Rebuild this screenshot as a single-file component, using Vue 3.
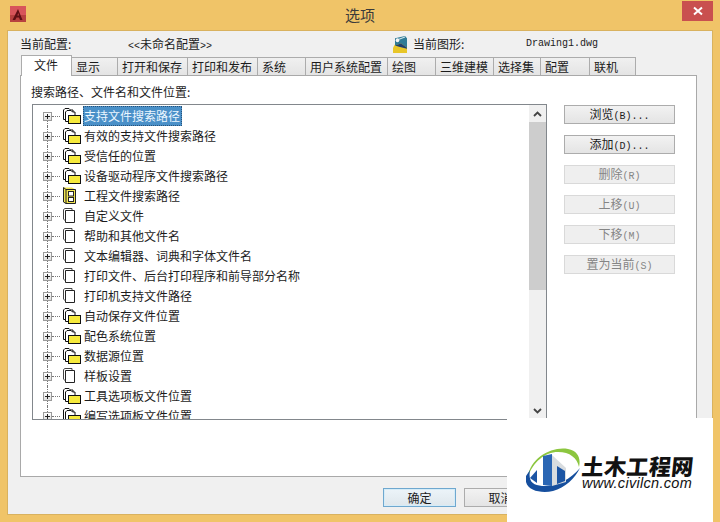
<script setup>
const tabs = [
  { t: '文件', w: 51, active: true }, { t: '显示', w: 46 }, { t: '打开和保存', w: 70 }, { t: '打印和发布', w: 70 },
  { t: '系统', w: 48 }, { t: '用户系统配置', w: 82 }, { t: '绘图', w: 48 }, { t: '三维建模', w: 58 },
  { t: '选择集', w: 47 }, { t: '配置', w: 49 }, { t: '联机', w: 46 }
]
const rows = [
  ['支持文件搜索路径', 'f'], ['有效的支持文件搜索路径', 'f'], ['受信任的位置', 'f'], ['设备驱动程序文件搜索路径', 'f'],
  ['工程文件搜索路径', 'p'], ['自定义文件', 'd'], ['帮助和其他文件名', 'd'], ['文本编辑器、词典和字体文件名', 'd'],
  ['打印文件、后台打印程序和前导部分名称', 'd'], ['打印机支持文件路径', 'd'], ['自动保存文件位置', 'f'], ['配色系统位置', 'f'],
  ['数据源位置', 'f'], ['样板设置', 'd'], ['工具选项板文件位置', 'f'], ['编写选项板文件位置', 'f']
]
const sideButtons = [
  { t: '浏览', k: '(B)...' }, { t: '添加', k: '(D)...' }, { t: '删除', k: '(R)', off: true },
  { t: '上移', k: '(U)', off: true }, { t: '下移', k: '(M)', off: true }, { t: '置为当前', k: '(S)', off: true }
]
</script>

<template>
  <div class="window">
    <header class="titlebar">
      <svg class="app-icon" viewBox="0 0 16 16" width="16" height="16">
        <rect width="16" height="16" fill="#d8555a" />
        <rect x="0" y="9" width="16" height="7" fill="#b8413f" />
        <path d="M2.5 14 L8 3 L12.5 14 L10 14 L9 11.5 L6.5 11.5 L5.2 14 Z" fill="#5f0f14" />
        <path d="M7.4 9.4 L8.3 7 L9 9.4 Z" fill="#c9474a" />
      </svg>
      <h1 class="title">选项</h1>
      <button class="close" type="button">
        <svg viewBox="0 0 10 10" width="10" height="10"><path d="M1 1.5 L9 8.5 M9 1.5 L1 8.5" stroke="#fff" stroke-width="2" /></svg>
      </button>
    </header>

    <div class="client">
      <div class="profile">
        <span class="profile-label">当前配置:</span>
        <span class="profile-name"><span class="half">&lt;&lt;</span>未命名配置<span class="half">&gt;&gt;</span></span>
        <svg class="drawing-icon" viewBox="0 0 16 16" width="16" height="17" preserveAspectRatio="none">
          <path d="M1 16 L1 11 L4 6 L15 6 L15 16 Z" fill="#e8c628" />
          <path d="M3 9 L3 2 L13 0 L15 2 L15 11 L9 7 Z" fill="#2f7b96" />
          <path d="M3 9 L9 7 L15 11 L15 12 L7 10 Z" fill="#1f3f70" />
          <circle cx="5.5" cy="4" r="1.8" fill="#f4f4f4" />
          <path d="M7 3 L13 1" stroke="#cfe4ea" stroke-width="1" />
        </svg>
        <span class="drawing-label">当前图形:</span>
        <span class="half drawing-name">Drawing1.dwg</span>
      </div>

      <nav class="tabs">
        <div v-for="tab in tabs" :key="tab.t" class="tab" :class="{ active: tab.active }" :style="{ width: tab.w + 'px' }">{{ tab.t }}</div>
      </nav>

      <section class="panel">
        <div class="panel-label">搜索路径、文件名和文件位置:</div>
        <div class="panel-main">
          <div class="tree">
            <ul class="tree-list">
              <li v-for="(row, i) in rows" :key="row[0]" class="row" :class="{ first: i === 0 }">
                <span class="expander"><i></i></span>
                <span class="connector"></span>
                <svg class="node-icon" viewBox="0 0 18 18" width="18" height="18">
                  <template v-if="row[1] === 'f'">
                    <path d="M0.5 12.5 V3 L2 1.5 H6 L7.5 3 H10 V12.5 Z" fill="#fff" stroke="#111" />
                    <path d="M2.5 14.5 V5 L4 3.5 H8 L9.5 5 H12 V14.5 Z" fill="#fff" stroke="#111" />
                    <rect x="5.5" y="8.5" width="12" height="8" fill="#f6ea3c" stroke="#111" />
                  </template>
                  <template v-else-if="row[1] === 'p'">
                    <path d="M0.5 0.5 H9 L12.5 2.5 V16.5 H3 L0.5 15 Z" fill="#f3e650" />
                    <path d="M3 2.5 H12.5 V16.5 H3 Z M3 2.5 L0.5 0.5 V15 L3 16.5" fill="none" stroke="#222" />
                    <rect x="5.5" y="4.5" width="5" height="4.5" fill="#fff" stroke="#222" />
                    <rect x="5.5" y="10.5" width="5" height="4" fill="#fff" stroke="#222" />
                  </template>
                  <template v-else>
                    <path d="M0.5 12 V2.5 L2 1.5 H9 V3" fill="#fff" stroke="#444" />
                    <path d="M2.5 3.5 H11.5 V15.5 H2.5 Z" fill="#fff" stroke="#222" />
                    <path d="M0.5 12 L2.5 14" stroke="#444" />
                  </template>
                </svg>
                <span class="node-text" :class="{ selected: i === 0 }">{{ row[0] }}</span>
              </li>
            </ul>
            <div class="scrollbar">
              <div class="arrow">
                <svg viewBox="0 0 9 6" width="9" height="6"><path d="M1 5 L4.5 1.5 L8 5" fill="none" stroke="#444" stroke-width="1.8" /></svg>
              </div>
              <div class="thumb"></div>
              <div class="track"></div>
              <div class="arrow">
                <svg viewBox="0 0 9 6" width="9" height="6"><path d="M1 1 L4.5 4.5 L8 1" fill="none" stroke="#444" stroke-width="1.8" /></svg>
              </div>
            </div>
          </div>
          <div class="side">
            <button v-for="b in sideButtons" :key="b.t" class="btn side-btn" :class="{ off: b.off }" type="button">{{ b.t }}<span class="half">{{ b.k }}</span></button>
          </div>
        </div>
      </section>

      <footer class="footer">
        <button class="btn foot-btn default" type="button">确定</button>
        <button class="btn foot-btn" type="button">取消</button>
      </footer>
    </div>

    <aside class="watermark">
      <svg class="logo" viewBox="526 448 56 46" width="56" height="46">
        <path d="M528 477 C530 458 552 446 568 449 C578 451 581 458 579 467 C577 458 570 452 558 452 C545 452 533 462 528 477Z" fill="#8cc63f" />
        <path d="M526 476 C523 490 540 494 553 491 C565 488 575 478 580 468 C570 480 555 487 542 486 C533 485 528 482 530 470 Z" fill="#164f9e" />
        <path d="M552 455 L566 468 V482 L552 486 Z" fill="#d8dcdf" />
        <path d="M543 456 L552 454 V486 L543 485 Z" fill="#2a66b4" />
        <path d="M530 478 L537 470 V483 Z" fill="#1c55a4" />
        <path d="M557 466 L565 471 V481 L557 484 Z" fill="#1c55a4" />
      </svg>
      <div class="brand">
        <div class="brand-cn">土木工程网</div>
        <div class="brand-url">www.civilcn.com</div>
      </div>
    </aside>
  </div>
</template>

<style>
html, body { margin: 0; padding: 0; }
</style>

<style scoped>
.window {
  position: relative;
  width: 720px;
  height: 522px;
  overflow: hidden;
  box-sizing: border-box;
  display: flex;
  flex-direction: column;
  background: #f0c468;
  font-family: "Noto Sans CJK SC", "Liberation Sans", sans-serif;
  font-size: 12px;
  color: #1c1c1c;
}
.titlebar {
  flex: none;
  height: 31px;
  display: grid;
  grid-template-columns: 1fr auto 1fr;
  align-items: center;
  padding: 0 7px 0 7px;
  box-sizing: border-box;
}
.app-icon { margin: -3px 0 0 3px; }
.title { margin: -1px 0 0; font-size: 15px; font-weight: 400; color: #3a3a3a; line-height: 20px; }
.close {
  justify-self: end;
  align-self: start;
  width: 31px;
  height: 20px;
  margin: 1px 0 0;
  padding: 0;
  border: 0;
  background: #c9504f;
  display: flex;
  align-items: center;
  justify-content: center;
}
.client {
  flex: none;
  height: 483px;
  margin: 0 8px;
  padding: 0 15px 0 12px;
  box-sizing: border-box;
  background: #f0f0f0;
  box-shadow: 0 0 0 1px #d9b25f;
  display: flex;
  flex-direction: column;
}
.profile { flex: none; height: 24px; display: flex; align-items: center; }
.half { font-family: "Liberation Mono", monospace; font-size: 10px; }
.profile-label { width: 108px; }
.profile-name { width: 264px; }
.drawing-icon { margin: 2px 5px 0 0; }
.drawing-label { width: 113px; }
.tabs { flex: none; height: 20px; margin-left: 1px; display: flex; align-items: flex-end; position: relative; z-index: 1; }
.tab {
  height: 18px;
  box-sizing: border-box;
  padding: 0 0 0 4px;
  border: 1px solid #acacac;
  border-bottom: 0;
  border-left: 0;
  background: linear-gradient(#f0f0f0, #e4e4e4);
  line-height: 17px;
  white-space: nowrap;
}
.tab.active {
  height: 21px;
  margin-bottom: -1px;
  padding-left: 12px;
  background: #fff;
  border-left: 1px solid #acacac;
  line-height: 18px;
}
.panel {
  flex: none;
  height: 402px;
  box-sizing: border-box;
  border: 1px solid #a9a9a9;
  background: #fff;
}
.panel-label { height: 28px; padding-left: 10px; line-height: 32px; box-sizing: border-box; }
.panel-main { display: flex; padding-left: 11px; align-items: flex-start; }
.tree {
  width: 515px;
  height: 316px;
  box-sizing: border-box;
  border: 1px solid #82878c;
  display: flex;
}
.tree-list { flex: 1; min-width: 0; margin: 0; padding: 1px 0 0; list-style: none; overflow: hidden; }
.row { position: relative; height: 20px; display: flex; align-items: center; padding-left: 10px; }
.row::before {
  content: "";
  position: absolute;
  left: 14px;
  top: 0;
  bottom: 0;
  border-left: 1px dotted #777;
}
.row.first::before { top: 10px; }
.expander {
  position: relative;
  z-index: 1;
  flex: none;
  width: 9px;
  height: 9px;
  box-sizing: border-box;
  border: 1px solid #9a9a9a;
  background: linear-gradient(#fff, #dcdcdc);
}
.expander::before { content: ""; position: absolute; left: 1px; right: 1px; top: 3px; height: 1px; background: #222; }
.expander i { position: absolute; top: 1px; bottom: 1px; left: 3px; width: 1px; background: #222; }
.connector { flex: none; width: 8px; border-top: 1px dotted #777; margin-right: 3px; }
.node-icon { flex: none; margin-right: 2px; }
.node-text { padding: 0 2px 0 1px; line-height: 20px; white-space: nowrap; }
.node-text.selected { background: #4a90c8; color: #eaf6ff; outline: 1px dotted #27527a; outline-offset: -1px; }
.scrollbar { flex: none; width: 17px; display: flex; flex-direction: column; background: #f0f0f0; }
.arrow { flex: none; height: 17px; display: flex; align-items: center; justify-content: center; }
.thumb { flex: none; height: 168px; background: #cdcdcd; }
.track { flex: 1; }
.side { margin-left: 17px; margin-top: 1px; display: flex; flex-direction: column; gap: 11px; }
.btn {
  box-sizing: border-box;
  height: 19px;
  padding: 0;
  border: 1px solid #acacac;
  background: linear-gradient(#f2f2f2, #e4e4e4);
  color: #1c1c1c;
  font-family: "Noto Sans CJK SC", sans-serif;
  font-size: 12px;
  line-height: 16px;
}
.side-btn { width: 111px; }
.side-btn.off { border-color: #d9d9d9; background: #efefef; color: #858585; }
.footer { flex: none; display: flex; gap: 8px; padding: 11px 0 0 363px; }
.foot-btn { width: 73px; }
.foot-btn.default { border-color: #6fa8cf; background: linear-gradient(#ecf4f9, #dfe7ec); box-shadow: inset 0 0 0 1px #d5ecf8; }
.watermark {
  position: absolute;
  left: 507px;
  top: 418px;
  width: 206px;
  height: 104px;
  background: #fff;
  display: flex;
  align-items: flex-start;
  padding: 30px 0 0 19px;
  box-sizing: border-box;
}
.logo { flex: none; }
.brand { margin-top: 7px; }
.brand-cn { font-size: 22px; font-weight: 900; line-height: 21px; letter-spacing: 0.4px; color: #111; white-space: nowrap; transform: skewX(-6deg); }
.brand-url { font-family: "Liberation Sans", sans-serif; font-style: italic; font-size: 14.5px; line-height: 15px; color: #111; white-space: nowrap; letter-spacing: 0.3px; margin-top: 0; }
</style>
